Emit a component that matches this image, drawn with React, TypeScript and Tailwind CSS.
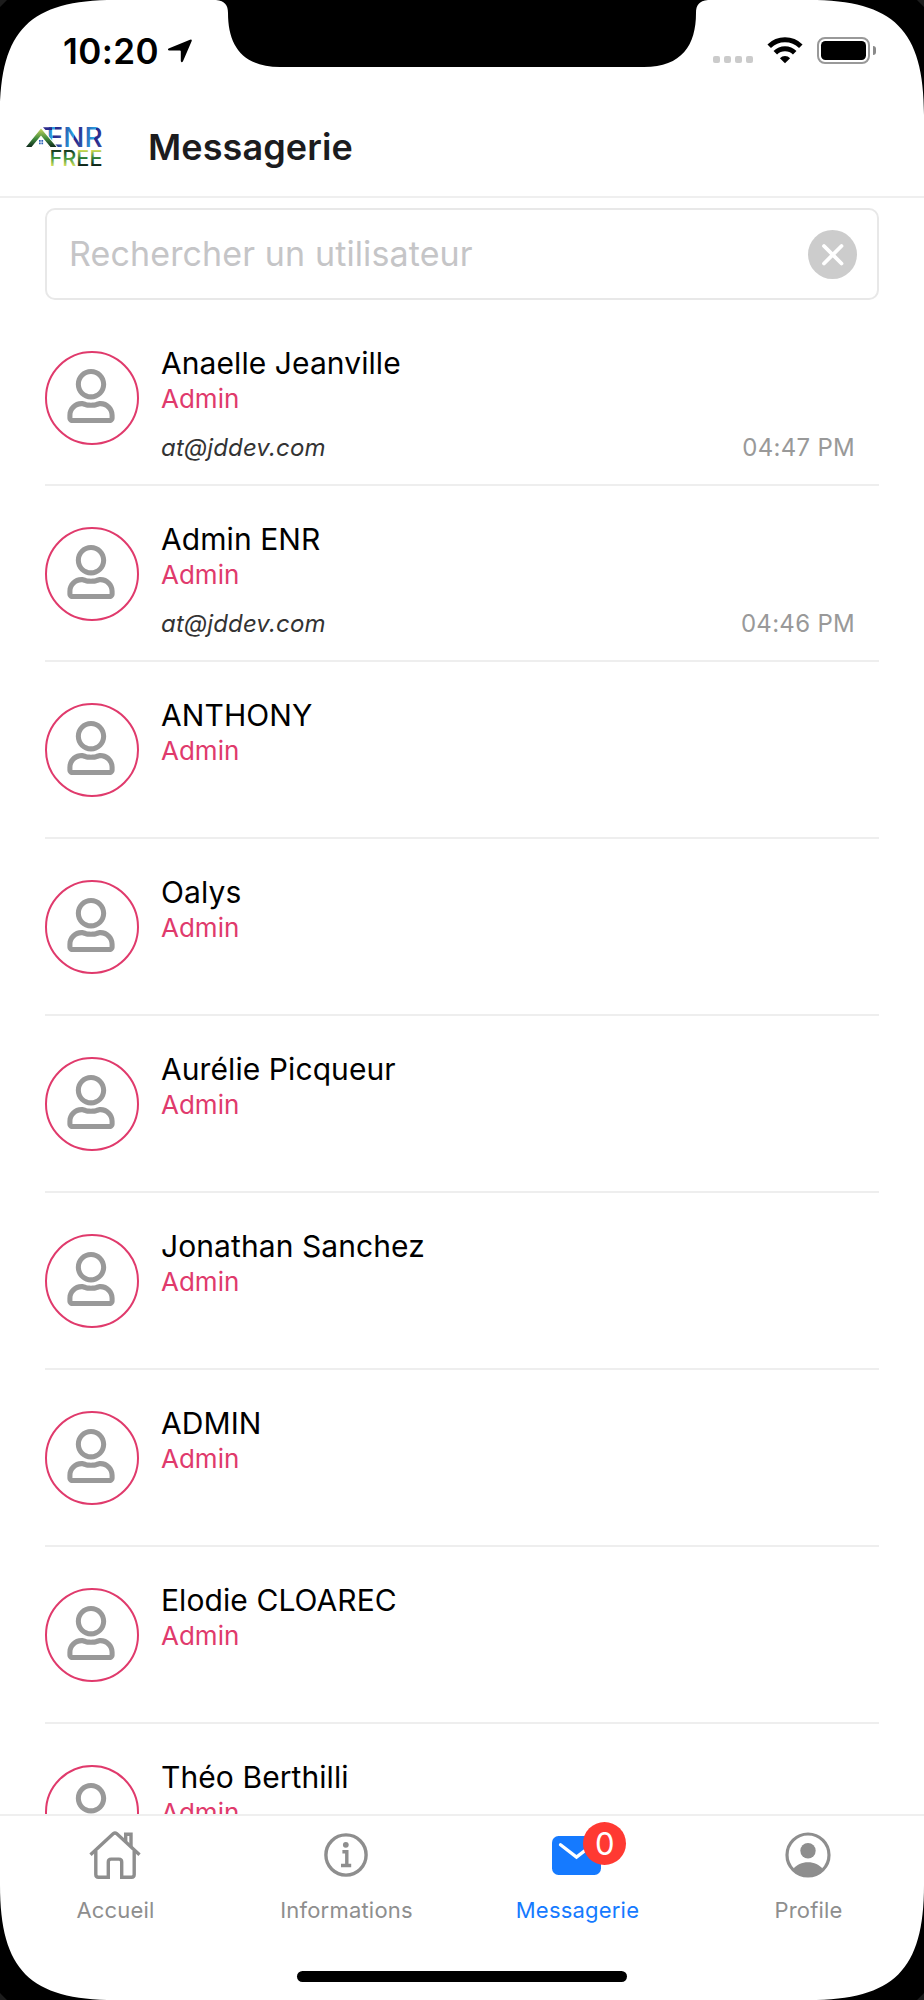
import React from "react";
import { FaRegUser } from "react-icons/fa";

interface Contact {
  name: string;
  role: string;
  email?: string;
  time?: string;
}

const contacts: Contact[] = [
  { name: "Anaelle Jeanville", role: "Admin", email: "at@jddev.com", time: "04:47 PM" },
  { name: "Admin ENR", role: "Admin", email: "at@jddev.com", time: "04:46 PM" },
  { name: "ANTHONY", role: "Admin" },
  { name: "Oalys", role: "Admin" },
  { name: "Aurélie Picqueur", role: "Admin" },
  { name: "Jonathan Sanchez", role: "Admin" },
  { name: "ADMIN", role: "Admin" },
  { name: "Elodie CLOAREC", role: "Admin" },
  { name: "Théo Berthilli", role: "Admin" },
];

const Logo: React.FC = () => (
  <svg width="77" height="42" viewBox="26 127 77 42" className="shrink-0 overflow-visible">
    <defs>
      <linearGradient id="blue" gradientUnits="userSpaceOnUse" x1="60" y1="0" x2="80" y2="4" spreadMethod="repeat">
        <stop offset="0.15" stopColor="#2b2a8c" />
        <stop offset="0.95" stopColor="#2a9fe0" />
      </linearGradient>
      <linearGradient id="roof" x1="0" y1="0" x2="0" y2="1">
        <stop offset="0" stopColor="#c9d75c" />
        <stop offset="0.55" stopColor="#3f8a3c" />
        <stop offset="1" stopColor="#0e2a1c" />
      </linearGradient>
      <linearGradient id="leaf" gradientUnits="userSpaceOnUse" x1="0" y1="151" x2="0" y2="167">
        <stop offset="0" stopColor="#14331f" />
        <stop offset="0.5" stopColor="#3f9440" />
        <stop offset="1" stopColor="#d5e05a" />
      </linearGradient>
      <linearGradient id="leafDark" gradientUnits="userSpaceOnUse" x1="0" y1="151" x2="0" y2="167">
        <stop offset="0" stopColor="#d5e05a" />
        <stop offset="0.5" stopColor="#2f7f3a" />
        <stop offset="1" stopColor="#0d1f18" />
      </linearGradient>
    </defs>
    <text
      x="46.5"
      y="147.6"
      textLength="56"
      lengthAdjust="spacingAndGlyphs"
      fontFamily="Inter, sans-serif"
      fontSize="26.5"
      fontWeight="500"
      fill="url(#blue)"
    >
      ENR
    </text>
    <path d="M43 128.3h9v2.8h-6.500z" fill="#2b2a8c" />
    <path
      d="M26 148L41 129.500l15.500 18.500h-6L41 136.500l-9.500 11.500z"
      fill="url(#roof)"
      stroke="#fff"
      strokeWidth="2"
      paintOrder="stroke"
    />
    <path d="M39 141h1.700v1.800H39zM41.400 141h1.700v1.800h-1.700zM39 143.500h1.700v1.800H39zM41.400 143.500h1.700v1.800h-1.700z" fill="#2a5fb8" />
    <text
      x="49.5"
      y="166.8"
      textLength="53"
      lengthAdjust="spacingAndGlyphs"
      fontFamily="Inter, sans-serif"
      fontSize="22"
      fontWeight="500"
    >
      <tspan fill="url(#leaf)">FR</tspan>
      <tspan fill="url(#leafDark)">EE</tspan>
    </text>
  </svg>
);

const StatusBar: React.FC = () => (
  <div className="flex h-[98px] shrink-0 items-start justify-between pl-[63px] pr-[48px] text-black">
    <div className="flex items-center pt-[31px]">
      <span className="text-[35px] font-semibold leading-10 tracking-[0.4px]">10:20</span>
      <svg width="26" height="24" viewBox="0 0 26 24" className="ml-2">
        <path d="M1.600 9.600L23 .700q2.400-.700 1.600 1.600L16 22.300q-1.400 2-2.200-.300V12.400q0-.900-.900-.900H1.900q-1.800-.700-.300-1.900z" />
      </svg>
    </div>
    <div className="flex items-end pt-[37px]">
      <div className="mb-px flex gap-[3.5px]">
        {[0, 1, 2, 3].map((i) => (
          <span key={i} className="h-[7.5px] w-[7.5px] rounded-[2px] bg-[#cbcbcb]" />
        ))}
      </div>
      <svg width="36" height="27" viewBox="0 0 36 27" className="ml-3.5" fill="none" stroke="#000" strokeWidth="5">
        <path d="M2.2 9.3a22.5 22.5 0 0 1 31.6 0" />
        <path d="M8.3 15.8a13.8 13.8 0 0 1 19.4 0" />
        <path d="M12.9 21.2a7.3 7.3 0 0 1 10.2 0L18 26.3z" fill="#000" stroke="none" />
      </svg>
      <div className="ml-3.5 flex h-[27px] items-center">
        <div className="h-[27px] w-[53px] rounded-[8px] border-2 border-[#999] p-[2px]">
          <div className="h-full w-full rounded-[4.5px] bg-black" />
        </div>
        <div className="ml-[2.5px] h-[9px] w-[3.5px] rounded-r-full bg-[#8a8a8a]" />
      </div>
    </div>
  </div>
);

const ContactRow: React.FC<{ contact: Contact }> = ({ contact }) => (
  <li
    className={`flex shrink-0 border-b-2 border-[#eeeeee] ${contact.email ? "h-[176px]" : "h-[177px]"}`}
  >
    <div className="mt-[41px] flex h-[94px] w-[94px] shrink-0 items-center justify-center rounded-full border-2 border-[#e03a6c] pb-1 pr-[1.5px]">
      <FaRegUser size={54} color="#999999" />
    </div>
    <div className="ml-[22px] flex-1 pt-[35px]">
      <p className="text-[30px] leading-9 tracking-[0.08px] text-black">{contact.name}</p>
      <p className="text-[26px] leading-9 text-[#e03a6c]">{contact.role}</p>
      {contact.email && (
        <div className="mt-[15px] flex justify-between pr-6 text-2xl leading-8">
          <span className="italic tracking-[0.15px] text-[#333]">{contact.email}</span>
          <span className="tracking-[0.3px] text-[#999]">{contact.time}</span>
        </div>
      )}
    </div>
  </li>
);

const HomeIcon = () => (
  <svg width="52" height="50" viewBox="0 0 52 50" fill="none" stroke="#8e8e8e" strokeWidth="3.4">
    <path d="M1.5 24.7L24.4 3.6q1.6-1.3 3.2 0L50.5 24.7" />
    <path d="M6.8 21v23.6q0 2.7 2.7 2.7h9.8V31.9q0-2.8 2.8-2.8h7.8q2.8 0 2.8 2.8v15.4h9.8q2.7 0 2.7-2.7V21" />
    <path d="M36.7 11.5V4.2h5.3v12.5" />
  </svg>
);

const InfoIcon = () => (
  <svg width="44" height="44" viewBox="0 0 44 44" fill="none" stroke="#8e8e8e" strokeWidth="3.4">
    <circle cx="22" cy="22" r="20.1" />
    <circle cx="21.8" cy="11.8" r="2.9" fill="#8e8e8e" stroke="none" />
    <path d="M18.4 18.8h4.4v13.6M17 32.5h10.2" />
  </svg>
);

const MailIcon = () => (
  <svg width="49" height="39" viewBox="0 0 49 39">
    <rect width="49" height="39" rx="6.5" fill="#157aff" />
    <path d="M8.5 8.8l16 12.3 16-12.3" fill="none" stroke="#fff" strokeWidth="3.3" strokeLinecap="round" />
  </svg>
);

const ProfileIcon = () => (
  <svg width="46" height="46" viewBox="0 0 46 46" fill="#8e8e8e">
    <circle cx="23" cy="23" r="21" fill="none" stroke="#8e8e8e" strokeWidth="3.2" />
    <circle cx="23" cy="18.7" r="7.7" />
    <path d="M8.2 37.4C11.5 32.4 17 30.3 23 30.3s11.5 2.1 14.8 7.1A20.8 20.8 0 0 1 23 44a20.8 20.8 0 0 1-14.8-6.6z" />
  </svg>
);

interface TabProps {
  label: string;
  icon: React.ElementType;
  active?: boolean;
  badge?: number;
}

const Tab: React.FC<TabProps> = ({ label, icon: Icon, active, badge }) => (
  <div className="flex flex-1 flex-col items-center">
    <div className="relative flex h-20 items-center justify-center pb-[2px] pr-[1.5px]">
      <Icon />
      {badge !== undefined && (
        <span className="absolute left-[31px] top-[6px] flex h-[43px] w-[43px] items-center justify-center rounded-full bg-[#ff3932] text-[31px] leading-none text-white">
          {badge}
        </span>
      )}
    </div>
    <span
      className={`text-[22px] leading-7 tracking-[0.2px] ${active ? "text-[#157aff]" : "text-[#8e8e8e]"}`}
    >
      {label}
    </span>
  </div>
);

// Black bezel around the screen: notch and rounded corners
const Bezel: React.FC = () => (
  <svg width="924" height="2000" viewBox="0 0 924 2000" className="pointer-events-none absolute inset-0">
    <path d="M216 0C225 1 228 5 228 13C228 45 242 67 280 67H644C682 67 696 45 696 13C696 5 699 1 708 0Z" />
    <path d="M0 0H115C30 0 0 30 0 115Z" />
    <path d="M924 0H809C894 0 924 30 924 115Z" />
    <path d="M0 2000H115C30 2000 0 1970 0 1885Z" />
    <path d="M924 2000H809C894 2000 924 1970 924 1885Z" />
    <path d="M0 0H7L0 7ZM924 0V7L917 0ZM0 2000V1993L7 2000ZM924 2000H917L924 1993Z" fill="#1c1c1c" />
  </svg>
);

export default function App() {
  return (
    <div className="relative flex h-[2000px] w-[924px] flex-col overflow-hidden bg-white font-['Inter',sans-serif]">
      <StatusBar />

      <header className="flex h-[100px] shrink-0 items-center border-b-2 border-[#efefef] pl-[26px]">
        <Logo />
        <h1 className="ml-[45px] text-[36px] font-semibold leading-[44px] tracking-[0.1px] text-[#1c1c1e]">
          Messagerie
        </h1>
      </header>

      <main className="flex min-h-0 flex-1 flex-col overflow-hidden px-[45px] pt-2.5">
        <div className="flex h-[92px] shrink-0 items-center justify-between rounded-[10px] border-2 border-[#e8e8e8] pl-[22px] pr-5">
          <span className="text-[34px] leading-[42px] tracking-[0.12px] text-[#c5c5c7]">
            Rechercher un utilisateur
          </span>
          <svg width="49" height="49" viewBox="0 0 49 49">
            <circle cx="24.5" cy="24.5" r="24.5" fill="#cccccc" />
            <path d="M16 16l17.5 17.5M33.5 16L16 33.5" stroke="#fff" strokeWidth="3.8" strokeLinecap="round" />
          </svg>
        </div>
        <ul className="mt-2.5 flex flex-col">
          {contacts.map((contact) => (
            <ContactRow key={contact.name} contact={contact} />
          ))}
        </ul>
      </main>

      <nav className="flex h-[186px] shrink-0 flex-col items-center justify-between border-t-2 border-[#efefef] bg-white pb-[18px]">
        <div className="flex w-full">
          <Tab label="Accueil" icon={HomeIcon} />
          <Tab label="Informations" icon={InfoIcon} />
          <Tab label="Messagerie" icon={MailIcon} active badge={0} />
          <Tab label="Profile" icon={ProfileIcon} />
        </div>
        <div className="h-[11px] w-[330px] rounded-full bg-black" />
      </nav>

      <Bezel />
    </div>
  );
}
